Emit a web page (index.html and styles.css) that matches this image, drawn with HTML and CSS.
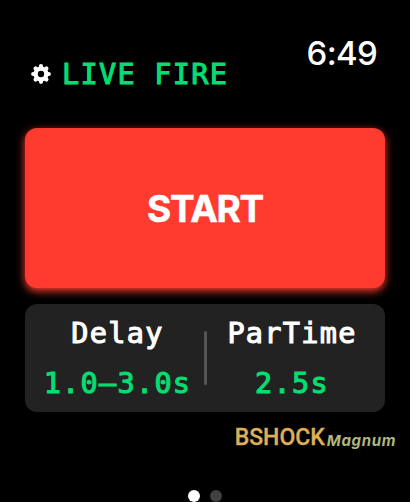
FILE: index.html
```html
<!DOCTYPE html>
<html lang="en">

<head>
    <meta charset="UTF-8">
    <title>Shot Timer</title>
    <link rel="stylesheet" href="styles.css">
</head>

<body>
    <div class="watch">
        <header class="header">
            <div class="mode">
                <svg class="gear" viewBox="-10 -10 20 20">
                    <circle r="5.4" fill="none" stroke="#fff" stroke-width="4.4" />
                    <g stroke="#fff" stroke-width="4.2" stroke-linecap="round">
                        <path d="M0-7V-7.8M0 7V7.8M-7 0H-7.8M7 0H7.8" />
                        <path d="M4.9-4.9L5.4-5.4M4.9 4.9L5.4 5.4M-4.9 4.9L-5.4 5.4M-4.9-4.9L-5.4-5.4" />
                    </g>
                </svg>
                <span class="mode-name">LIVE FIRE</span>
            </div>
            <span class="clock">6:49</span>
        </header>

        <button class="start">START</button>

        <div class="settings">
            <div class="setting setting--delay">
                <span class="setting-label">Delay</span>
                <span class="setting-value">1.0–3.0s</span>
            </div>
            <div class="divider"></div>
            <div class="setting setting--par">
                <span class="setting-label">ParTime</span>
                <span class="setting-value">2.5s</span>
            </div>
        </div>

        <div class="brand">
            <span class="brand-name">BSHOCK</span>
            <span class="brand-model">Magnum</span>
        </div>

        <div class="pages">
            <div class="dot dot--active"></div>
            <div class="dot"></div>
        </div>
    </div>
</body>

</html>
```

FILE: styles.css
```css
body {
    margin: 0;
    background-color: #000;
    overflow: hidden;
}

.watch {
    width: 410px;
    height: 502px;
    display: flex;
    flex-direction: column;
    background-color: #000;
    font-family: Inter, sans-serif;
    color: #fff;
}

.header {
    height: 128px;
    box-sizing: border-box;
    padding: 34px 33px 0 31px;
    display: flex;
    justify-content: space-between;
    align-items: flex-start;
}

.mode {
    display: flex;
    align-items: center;
    height: 40px;
    margin-top: 20px;
}

.gear {
    width: 20px;
    height: 20px;
}

.mode-name,
.setting-label,
.setting-value {
    font-family: "DejaVu Sans Mono", monospace;
    font-size: 28.5px;
    line-height: 40px;
    letter-spacing: 1.3px;
    -webkit-text-stroke: 1.1px currentColor;
}

.mode-name {
    padding-top: 2px;
    margin-left: 11px;
    color: #04de71;
}

.clock {
    font-size: 33px;
    line-height: 38px;
    font-weight: 500;
    letter-spacing: -0.7px;
}

.start {
    width: 360px;
    height: 160px;
    margin: 0 25px;
    padding: 0;
    border: none;
    border-radius: 12px;
    background-color: #ff3b30;
    box-shadow: 0 3px 8px #ff3b30;
    color: #fff;
    font-family: Inter, sans-serif;
    font-size: 37px;
    font-weight: 700;
    letter-spacing: -1.3px;
    -webkit-text-stroke: 0.5px #fff;
}

.settings {
    width: 360px;
    height: 108px;
    margin: 16px 25px 0;
    border-radius: 12px;
    background-color: #222;
    display: flex;
    justify-content: center;
    align-items: center;
    z-index: 1;
}

.setting {
    width: 178px;
    box-sizing: border-box;
    padding-top: 2px;
    display: flex;
    flex-direction: column;
    align-items: center;
    gap: 10px;
    white-space: nowrap;
}

.setting--delay {
    padding-left: 6px;
}

.setting--par {
    padding-right: 7px;
}

.setting-value {
    color: #04de71;
}

.divider {
    width: 3px;
    height: 54px;
    border-radius: 2px;
    background-color: #555;
}

.brand {
    display: flex;
    align-items: baseline;
    justify-content: flex-end;
    gap: 2px;
    height: 30px;
    padding: 11px 14px 0 0;
}

.brand-name {
    font-family: Roboto, sans-serif;
    font-size: 23px;
    line-height: 30px;
    font-weight: 500;
    color: #deae58;
    -webkit-text-stroke: 0.3px #deae58;
}

.brand-model {
    position: relative;
    top: 1px;
    font-size: 15px;
    font-weight: 700;
    font-style: italic;
    letter-spacing: 0.65px;
    color: #b0b67c;
}

.pages {
    display: flex;
    justify-content: center;
    gap: 10px;
    margin-top: auto;
}

.dot {
    width: 12px;
    height: 12px;
    border-radius: 50%;
    background-color: #404040;
}

.dot--active {
    background-color: #fff;
}
```
